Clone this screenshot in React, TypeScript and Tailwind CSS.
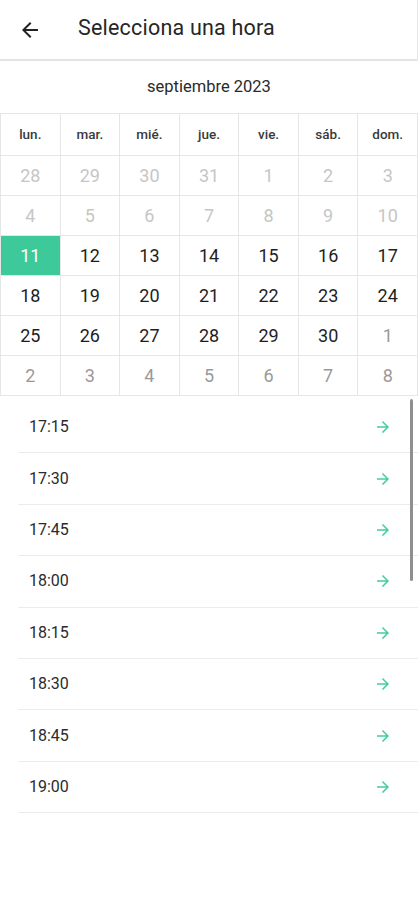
import React from "react";

const weekdays = ["lun.", "mar.", "mié.", "jue.", "vie.", "sáb.", "dom."];

type Day = { n: number; kind: "past" | "cur" | "next" | "sel" };

const days: Day[] = [
  ...[28, 29, 30, 31, 1, 2, 3, 4, 5, 6, 7, 8, 9, 10].map((n) => ({ n, kind: "past" as const })),
  { n: 11, kind: "sel" },
  ...Array.from({ length: 19 }, (_, i) => ({ n: 12 + i, kind: "cur" as const })),
  ...[1, 2, 3, 4, 5, 6, 7, 8].map((n) => ({ n, kind: "next" as const })),
];

const times = ["17:15", "17:30", "17:45", "18:00", "18:15", "18:30", "18:45", "19:00"];

function cls(kind: Day["kind"]) {
  if (kind === "sel") return "bg-[#3ec99b] text-white";
  if (kind === "past") return "bg-white text-[#c6c6c6]";
  if (kind === "next") return "bg-white text-[#9a9a9a]";
  return "bg-white text-[#1e1e1e]";
}

export default function App() {
  return (
    <div
      className="w-[418px] h-[900px] bg-white overflow-hidden relative"
      style={{ fontFamily: "Roboto, 'Noto Sans', sans-serif" }}
    >
      <header className="h-[61px] flex items-center border-b-[2px] border-[#e4e4e4] border-r border-r-[#e8e8e8]">
        <div className="w-[78px] flex items-center pl-[18px]">
          <svg width="24" height="24" viewBox="0 0 24 24" className="text-[#222]">
            <path
              d="M20 11H7.83l5.59-5.59L12 4l-8 8 8 8 1.41-1.41L7.83 13H20v-2z"
              fill="currentColor"
            />
          </svg>
        </div>
        <h1 className="text-[21.5px] text-[#262626] tracking-[0.2px] -mt-[2px]">Selecciona una hora</h1>
      </header>

      <div className="h-[52px] flex items-center justify-center text-[16.5px] text-[#2a2a2a]">
        septiembre 2023
      </div>

      <div className="grid grid-cols-7 gap-px bg-[#e6e6e6] p-px">
        {weekdays.map((w) => (
          <div
            key={w}
            className="h-[41px] bg-white flex items-center justify-center text-[13.5px] font-medium text-[#3a3a3a]"
          >
            {w}
          </div>
        ))}
        {days.map((d, i) => (
          <div
            key={i}
            className={`h-[39px] flex items-center justify-center text-[18px] ${cls(d.kind)}`}
          >
            {d.n}
          </div>
        ))}
      </div>

      <div className="pt-[6px] relative">
        {times.map((t) => (
          <div
            key={t}
            className="ml-[18px] h-[51.4px] border-b border-[#ececec] flex items-center justify-between pl-[11px] pr-[26px]"
          >
            <span className="text-[16px] text-[#2b2b2b]">{t}</span>
            <svg width="18" height="18" viewBox="0 0 24 24" className="text-[#45cc9f]">
              <path
                d="M12 4l-1.41 1.41L16.17 11H4v2h12.17l-5.58 5.59L12 20l8-8z"
                fill="currentColor"
              />
            </svg>
          </div>
        ))}
        <div className="absolute left-[410px] top-[3px] w-[3px] h-[182px] rounded-full bg-[#8f8f8f]" />
      </div>
    </div>
  );
}
